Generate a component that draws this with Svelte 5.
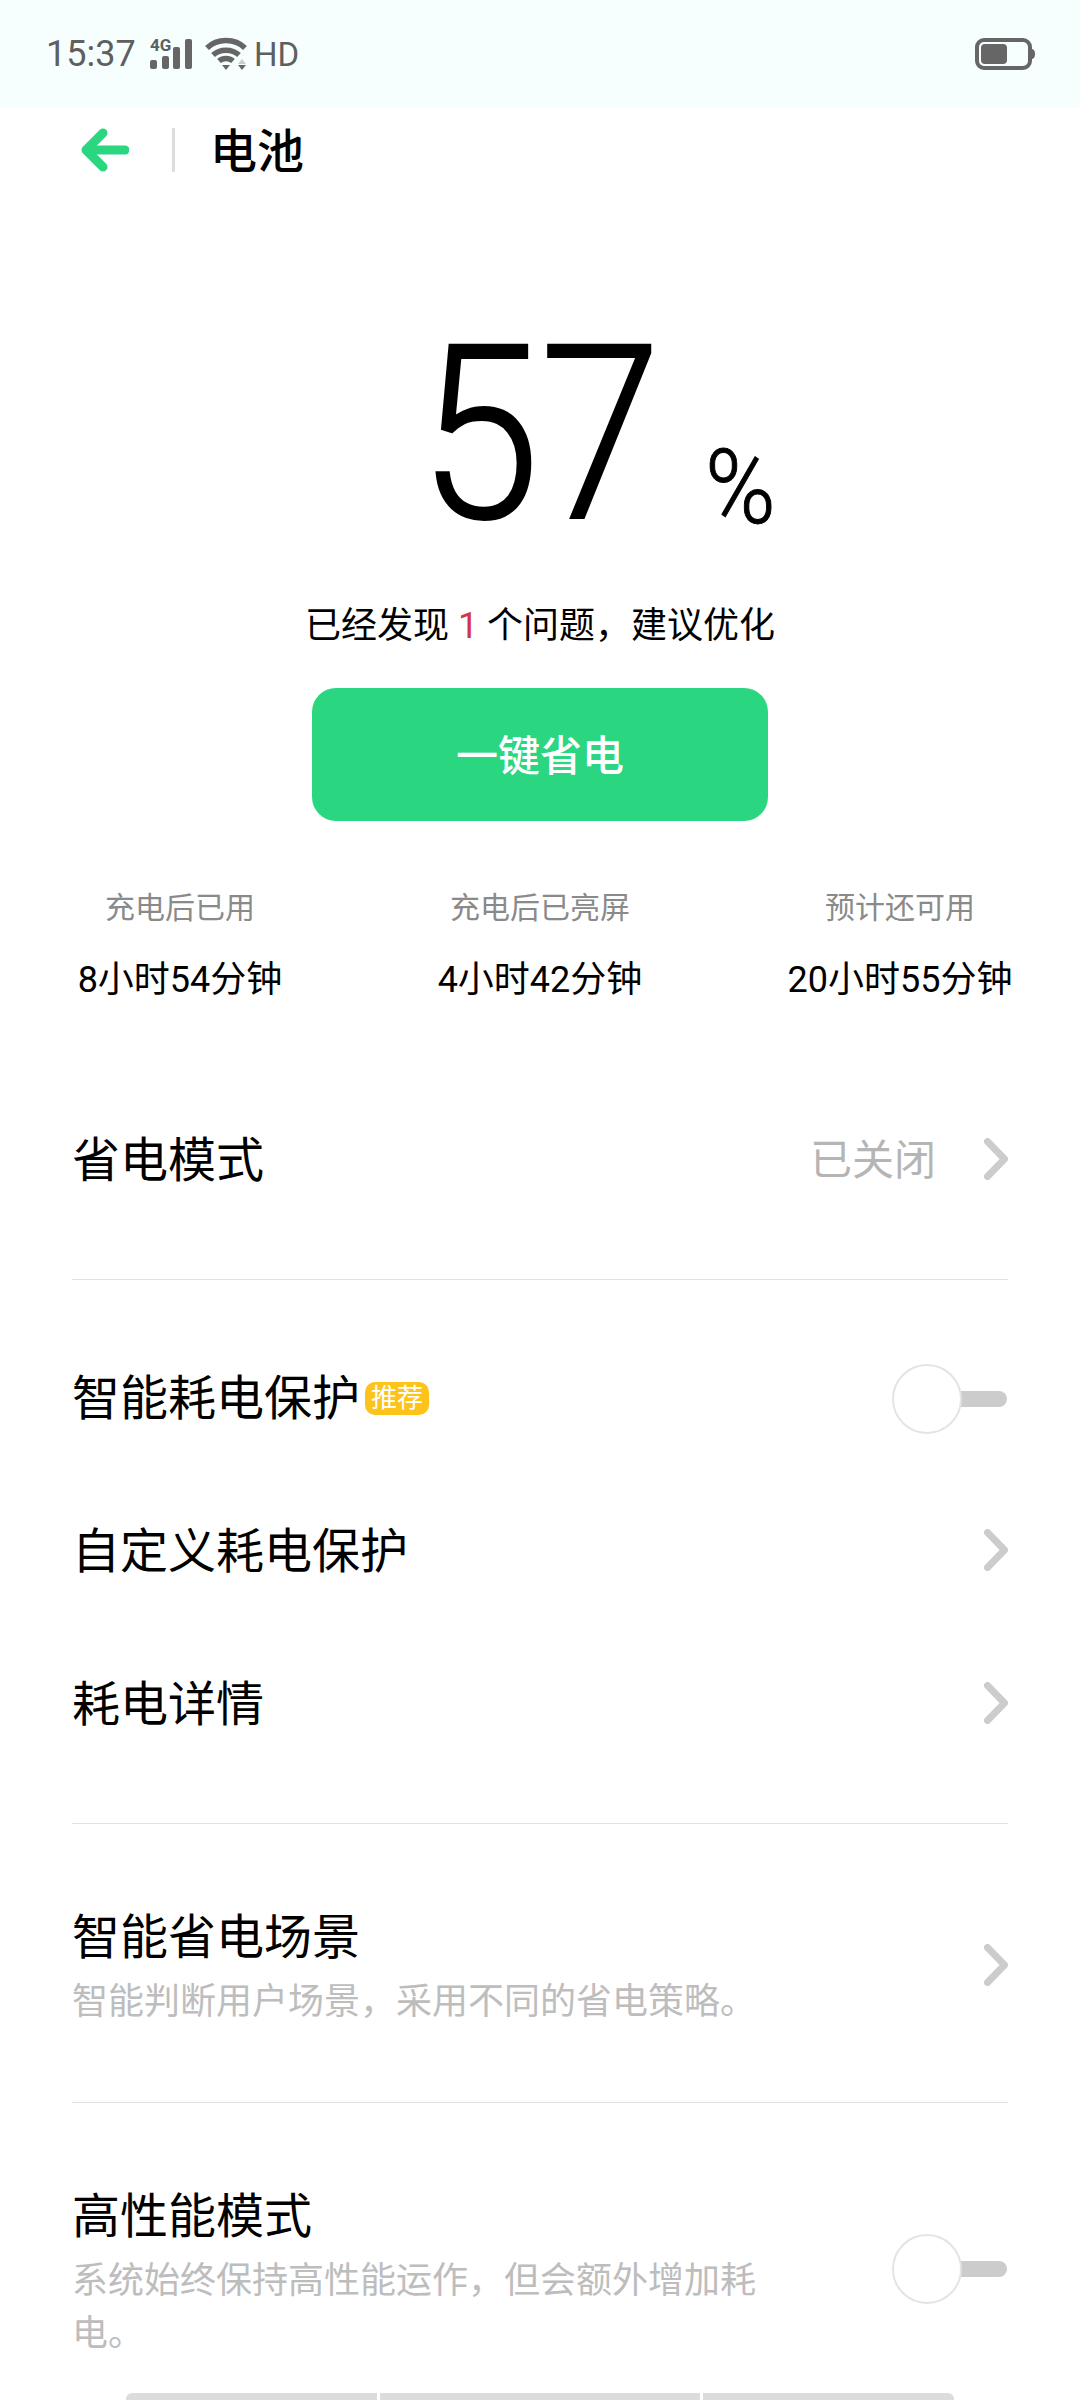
<script>
    const stats = [
        { label: '充电后已用', value: '8小时54分钟' },
        { label: '充电后已亮屏', value: '4小时42分钟' },
        { label: '预计还可用', value: '20小时55分钟' }
    ];
</script>

<div class="page">
    <header class="status">
        <span class="time">15:37</span>
        <span class="signal">
            <span class="net">4G</span>
            <svg width="42" height="30" viewBox="0 0 42 30" fill="#666">
                <rect x="0" y="21" width="7" height="9" rx="2" />
                <rect x="12" y="17" width="7" height="13" rx="2" />
                <rect x="23" y="8" width="7" height="22" rx="2" />
                <rect x="35" y="0" width="7" height="30" rx="2" />
            </svg>
        </span>
        <svg class="wifi" width="42" height="34" viewBox="0 0 42 34" fill="none" stroke="#666" stroke-width="5.500">
            <path d="M2 11 C12 1 30 1 40 11" />
            <path d="M8 18 C15 11.500 27 11.500 34 18" />
            <path d="M14 24 C18 20.500 24 20.500 28 24" />
            <path d="M17 28 L25 28 L21 33 Z" fill="#666" stroke="none" />
            <path d="M33 22 L41 22 L37 27 Z" transform="rotate(180 37 24.500)" fill="#ccc" stroke="none" />
            <path d="M33 28 L41 28 L37 33 Z" fill="#666" stroke="none" />
        </svg>
        <span class="hd">HD</span>
        <svg class="battery" width="60" height="32" viewBox="0 0 60 32">
            <rect x="2" y="2" width="53" height="28" rx="7" fill="none" stroke="#666" stroke-width="4" />
            <rect x="6" y="6" width="26" height="20" rx="4" fill="#666" />
            <path d="M56 11 C59 11 60 13 60 16 C60 19 59 21 56 21 Z" fill="#666" />
        </svg>
    </header>

    <nav class="nav">
        <svg width="48" height="44" viewBox="0 0 48 44" fill="none" stroke="#2bd681" stroke-width="9" stroke-linecap="round" stroke-linejoin="round">
            <path d="M22 5 L5 22 L22 39" />
            <path d="M6 22 L44 22" />
        </svg>
        <span class="nav-line"></span>
        <h1>电池</h1>
    </nav>

    <section class="hero">
        <div class="level">
            <span class="num">57</span>
            <span class="pct">%</span>
        </div>
        <p class="msg">已经发现 <span class="red">1</span> 个问题，建议优化</p>
        <button class="save">一键省电</button>
        <div class="stats">
            {#each stats as s}
                <div class="stat">
                    <div class="stat-label">{s.label}</div>
                    <div class="stat-value">{s.value}</div>
                </div>
            {/each}
        </div>
    </section>

    <section class="group">
        <div class="row">
            <span class="title">省电模式</span>
            <span class="right">
                <span class="state">已关闭</span>
                <svg class="chev" width="24" height="42" viewBox="0 0 24 42" fill="none" stroke="#ccc" stroke-width="7" stroke-linecap="round" stroke-linejoin="round"><path d="M3.500 3.500 L20.500 21 L3.500 38.500" /></svg>
            </span>
        </div>
    </section>

    <section class="group">
        <div class="row">
            <span class="title-wrap">
                <span class="title">智能耗电保护</span>
                <span class="badge">推荐</span>
            </span>
            <span class="toggle"><span class="knob"></span></span>
        </div>
        <div class="row">
            <span class="title">自定义耗电保护</span>
            <svg class="chev" width="24" height="42" viewBox="0 0 24 42" fill="none" stroke="#ccc" stroke-width="7" stroke-linecap="round" stroke-linejoin="round"><path d="M3.500 3.500 L20.500 21 L3.500 38.500" /></svg>
        </div>
        <div class="row">
            <span class="title">耗电详情</span>
            <svg class="chev" width="24" height="42" viewBox="0 0 24 42" fill="none" stroke="#ccc" stroke-width="7" stroke-linecap="round" stroke-linejoin="round"><path d="M3.500 3.500 L20.500 21 L3.500 38.500" /></svg>
        </div>
    </section>

    <section class="group">
        <div class="row tall">
            <div class="text">
                <div class="title">智能省电场景</div>
                <div class="sub">智能判断用户场景，采用不同的省电策略。</div>
            </div>
            <svg class="chev" width="24" height="42" viewBox="0 0 24 42" fill="none" stroke="#ccc" stroke-width="7" stroke-linecap="round" stroke-linejoin="round"><path d="M3.500 3.500 L20.500 21 L3.500 38.500" /></svg>
        </div>
    </section>

    <section class="group last">
        <div class="row tall">
            <div class="text">
                <div class="title">高性能模式</div>
                <div class="sub">系统始终保持高性能运作，但会额外增加耗电。</div>
            </div>
            <span class="toggle"><span class="knob"></span></span>
        </div>
    </section>

    <div class="tabs">
        <span></span>
        <span></span>
        <span></span>
    </div>
</div>

<style>
    :global(body) {
        margin: 0;
        background: #fff;
    }

    .page {
        position: relative;
        width: 1080px;
        height: 2400px;
        overflow: hidden;
        font-family: Roboto, "Noto Sans CJK SC", sans-serif;
        color: #000;
    }

    .status {
        height: 108px;
        background: #f6fffe;
        display: flex;
        align-items: center;
        padding: 0 45px 0 46px;
        box-sizing: border-box;
        color: #5f5f5f;
    }

    .time {
        font-size: 36px;
        width: 104px;
    }

    .signal {
        position: relative;
        display: flex;
    }

    .net {
        position: absolute;
        left: 0;
        top: -2px;
        font-size: 17px;
        font-weight: 700;
        line-height: 17px;
    }

    .wifi {
        margin-left: 13px;
    }

    .hd {
        font-size: 33px;
        margin-left: 7px;
    }

    .battery {
        margin-left: auto;
    }

    .nav {
        height: 84px;
        display: flex;
        align-items: center;
        padding-left: 81px;
    }

    .nav-line {
        width: 3px;
        height: 44px;
        background: #ddd;
        margin-left: 43px;
    }

    h1 {
        font-size: 47px;
        font-weight: 500;
        margin: 0 0 5px 35px;
    }

    .hero {
        padding-top: 94px;
    }

    .level {
        display: grid;
        grid-template-columns: 1fr auto 1fr;
        align-items: baseline;
        height: 295px;
        line-height: 295px;
    }

    .num {
        grid-column: 2;
        font-size: 243px;
        font-weight: 300;
        display: inline-block;
        transform: translateY(2px) scaleX(0.9);
        -webkit-text-stroke: 2px #000;
    }

    .pct {
        grid-column: 3;
        font-size: 104px;
        font-weight: 300;
        margin-left: 30px;
        display: inline-block;
        transform: translateY(7px) scaleX(0.92);
        transform-origin: left;
        -webkit-text-stroke: 1px #000;
    }

    .msg {
        margin: 0;
        text-align: center;
        font-size: 36px;
        line-height: 50px;
        margin-top: 20px;
    }

    .red {
        color: #d3344a;
    }

    .save {
        display: block;
        width: 456px;
        height: 133px;
        margin: 37px auto 0;
        padding: 0 0 4px;
        border: 0;
        border-radius: 24px;
        background: #2bd681;
        color: #fff;
        font-family: inherit;
        font-size: 42px;
        font-weight: 500;
    }

    .stats {
        display: grid;
        grid-template-columns: repeat(3, 360px);
        margin-top: 66px;
        text-align: center;
    }

    .stat-label {
        font-size: 30px;
        line-height: 42px;
        color: #8a8a8a;
    }

    .stat-value {
        font-size: 36px;
        line-height: 50px;
        margin-top: 26px;
    }

    .group {
        margin: 0 72px;
        padding: 42px 0;
        border-bottom: 1px solid #e2e2e2;
    }

    .hero + .group {
        margin-top: 37px;
    }

    .group.last {
        border-bottom: 0;
    }

    .row {
        height: 153px;
        display: flex;
        align-items: center;
        justify-content: space-between;
    }

    .row.tall {
        height: auto;
        padding: 39px 0 31px;
    }

    .title {
        font-size: 48px;
        line-height: 65px;
    }

    .title-wrap {
        display: flex;
        align-items: center;
    }

    .badge {
        background: #fdc31b;
        color: #fff;
        font-size: 26px;
        line-height: 33px;
        padding: 0 6px;
        border-radius: 10px;
        margin-left: 5px;
    }

    .right {
        display: flex;
        align-items: center;
    }

    .state {
        font-size: 42px;
        color: #b5b5b5;
        margin: 0 48px 8px 0;
    }

    .chev {
        flex: none;
        margin-bottom: 4px;
    }

    .text {
        width: 700px;
    }

    .sub {
        font-size: 36px;
        line-height: 53px;
        color: #bdbdbd;
        margin-top: 6px;
    }

    .toggle {
        position: relative;
        flex: none;
        height: 16px;
        background: #ccc;
        border-radius: 8px;
        width: 60px;
        margin: 0 1px 0 55px;
    }

    .tall .toggle {
        margin-bottom: 8px;
    }

    .knob {
        position: absolute;
        left: -55px;
        top: -27px;
        width: 70px;
        height: 70px;
        box-sizing: border-box;
        border: 2px solid #e4e4e4;
        border-radius: 50%;
        background: #fff;
    }

    .tabs {
        position: absolute;
        left: 126px;
        bottom: 0;
        display: flex;
        gap: 3px;
        height: 7px;
    }

    .tabs span {
        background: #dcdcdf;
        height: 7px;
        width: 251px;
    }

    .tabs span:nth-child(2) {
        width: 320px;
    }

    .tabs span:first-child {
        border-radius: 6px 0 0 0;
    }

    .tabs span:last-child {
        border-radius: 0 6px 0 0;
    }
</style>
